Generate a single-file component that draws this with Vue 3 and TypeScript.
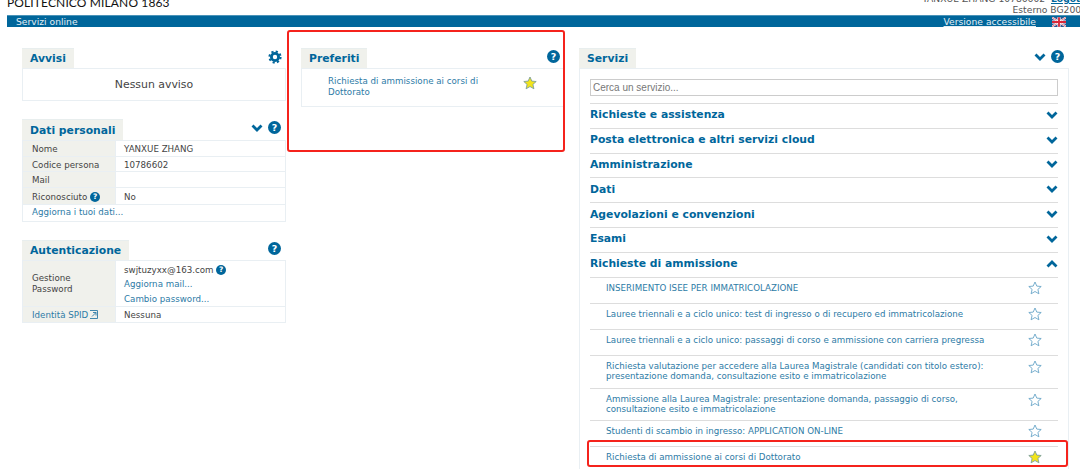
<script setup lang="ts">
const sections: string[] = [
  'Richieste e assistenza',
  'Posta elettronica e altri servizi cloud',
  'Amministrazione',
  'Dati',
  'Agevolazioni e convenzioni',
  'Esami',
]
interface Item { lines: string[]; h: number; on?: boolean }
const items: Item[] = [
  { lines: ['INSERIMENTO ISEE PER IMMATRICOLAZIONE'], h: 26 },
  { lines: ['Lauree triennali e a ciclo unico: test di ingresso o di recupero ed immatricolazione'], h: 26 },
  { lines: ['Lauree triennali e a ciclo unico: passaggi di corso e ammissione con carriera pregressa'], h: 26 },
  { lines: ['Richiesta valutazione per accedere alla Laurea Magistrale (candidati con titolo estero):', 'presentazione domanda, consultazione esito e immatricolazione'], h: 33 },
  { lines: ['Ammissione alla Laurea Magistrale: presentazione domanda, passaggio di corso,', 'consultazione esito e immatricolazione'], h: 32 },
  { lines: ['Studenti di scambio in ingresso: APPLICATION ON-LINE'], h: 26 },
  { lines: ['Richiesta di ammissione ai corsi di Dottorato'], h: 26, on: true },
]
const starPts = '7,1 8.8,5.1 13.2,5.5 9.9,8.4 10.9,12.8 7,10.5 3.1,12.8 4.1,8.4 0.8,5.5 5.2,5.1'
</script>

<template>
  <div class="page">
    <header class="top">
      <div class="logo">POLITECNICO MILANO 1863</div>
      <div class="user">
        <div>YANXUE ZHANG 10786602 &nbsp;<a class="logout">Logout</a></div>
        <div>Esterno BG2001</div>
      </div>
    </header>
    <div class="bar">
      <span>Servizi online</span>
      <span class="bar-right">
        <a class="access">Versione accessibile</a>
        <svg class="flag" width="15" height="10" viewBox="0 0 15 10">
          <rect width="15" height="10" fill="#3c4f8f" />
          <path d="M0 0L15 10M15 0L0 10" stroke="#fff" stroke-width="2" />
          <path d="M0 0L15 10M15 0L0 10" stroke="#d8404a" stroke-width=".8" />
          <path d="M7.5 0V10M0 5H15" stroke="#fff" stroke-width="3.4" />
          <path d="M7.5 0V10M0 5H15" stroke="#d8283a" stroke-width="2" />
        </svg>
      </span>
    </div>

    <main class="cols">
      <div class="col col-left">
        <section class="panel">
          <div class="head">
            <h2 class="tab">Avvisi</h2>
            <svg class="ico gear" width="14" height="14" viewBox="0 0 14 14">
              <circle cx="7" cy="7" r="3.6" fill="none" stroke="#00669b" stroke-width="2.8" />
              <circle cx="7" cy="7" r="5.6" fill="none" stroke="#00669b" stroke-width="2" stroke-dasharray="2.2 2.2" />
            </svg>
          </div>
          <div class="box notice">Nessun avviso</div>
        </section>

        <section class="panel gap-personal">
          <div class="head head-tall">
            <h2 class="tab">Dati personali</h2>
            <svg class="chev" width="12" height="8" viewBox="0 0 12 8"><path d="M1.500 1.500L6 6l4.500-4.500" fill="none" stroke="#00669b" stroke-width="2.800" /></svg>
            <span class="help big">?</span>
          </div>
          <div class="box">
            <div class="row r1"><div class="k">Nome</div><div class="v">YANXUE ZHANG</div></div>
            <div class="row r1"><div class="k">Codice persona</div><div class="v">10786602</div></div>
            <div class="row r1"><div class="k">Mail</div><div class="v"></div></div>
            <div class="row r2"><div class="k">Riconosciuto <span class="help small">?</span></div><div class="v">No</div></div>
            <div class="link-row"><a class="lnk">Aggiorna i tuoi dati...</a></div>
          </div>
        </section>

        <section class="panel gap-auth">
          <div class="head">
            <h2 class="tab">Autenticazione</h2>
            <span class="help big">?</span>
          </div>
          <div class="box">
            <div class="row r3">
              <div class="k center">Gestione<br />Password</div>
              <div class="v stack">
                <div>swjtuzyxx@163.com <span class="help small">?</span></div>
                <a class="lnk">Aggiorna mail...</a>
                <a class="lnk">Cambio password...</a>
              </div>
            </div>
            <div class="row r1">
              <div class="k"><a class="lnk">Identità SPID</a><svg class="ext" width="9" height="9" viewBox="0 0 9 9"><path d="M1 .500h7.500V8.500H1M3 6.500L7 2.500M4 2.500h3v3" fill="none" stroke="#2d7ba6" stroke-width=".9" /></svg></div>
              <div class="v">Nessuna</div>
            </div>
          </div>
        </section>
      </div>

      <div class="col col-mid">
        <section class="panel">
          <div class="head">
            <h2 class="tab">Preferiti</h2>
            <span class="help big">?</span>
          </div>
          <div class="box fav">
            <a class="lnk fav-text">Richiesta di ammissione ai corsi di Dottorato</a>
            <svg class="fav-star" width="14" height="14" viewBox="0 0 14 14"><polygon :points="starPts" fill="#f2e41c" stroke="#7d9f9c" stroke-width=".9" /></svg>
          </div>
        </section>
      </div>

      <div class="col col-right">
        <section class="panel">
          <div class="head">
            <h2 class="tab">Servizi</h2>
            <svg class="chev" width="12" height="8" viewBox="0 0 12 8"><path d="M1.500 1.500L6 6l4.500-4.500" fill="none" stroke="#00669b" stroke-width="2.800" /></svg>
            <span class="help big">?</span>
          </div>
          <div class="box services">
            <input class="search" placeholder="Cerca un servizio..." />
            <div v-for="s in sections" :key="s" class="sec">
              <span>{{ s }}</span>
              <svg width="12" height="8" viewBox="0 0 12 8"><path d="M1.500 1.500L6 6l4.500-4.500" fill="none" stroke="#00669b" stroke-width="2.800" /></svg>
            </div>
            <div class="sec">
              <span>Richieste di ammissione</span>
              <svg width="12" height="8" viewBox="0 0 12 8"><path d="M1.500 6.500L6 2l4.500 4.500" fill="none" stroke="#00669b" stroke-width="2.800" /></svg>
            </div>
            <div v-for="it in items" :key="it.lines[0]" class="item" :style="{ height: it.h + 'px' }">
              <a class="lnk item-text"><span v-for="l in it.lines" :key="l" class="line">{{ l }}</span></a>
              <svg class="item-star" :class="{ double: it.lines.length > 1 }" width="14" height="14" viewBox="0 0 14 14">
                <polygon :points="starPts" :fill="it.on ? '#f2e41c' : '#fff'" :stroke="it.on ? '#7d9f9c' : '#6aa6c8'" stroke-width=".9" />
              </svg>
            </div>
          </div>
        </section>
      </div>
    </main>

    <div class="mark mark-fav"></div>
    <div class="mark mark-item"></div>
  </div>
</template>

<style>
html, body { margin: 0; background: #fff; overflow: hidden; }
</style>

<style scoped>
.page {
  position: relative;
  width: 1080px;
  height: 469px;
  overflow: hidden;
  background: #fff;
  font-family: "DejaVu Sans", Verdana, sans-serif;
  font-size: 8.700px;
  color: #444;
}
a { text-decoration: none; }
.top {
  height: 15px;
  padding-left: 7px;
  display: flex;
  justify-content: space-between;
  align-items: flex-end;
  overflow: hidden;
}
.logo {
  font-family: Lato, sans-serif;
  font-size: 12px;
  line-height: 14px;
  letter-spacing: .13px;
  color: #111;
  margin-bottom: 5px;
}
.user {
  text-align: right;
  font-size: 9.200px;
  line-height: 11px;
  margin-right: -7px;
  color: #555;
  white-space: nowrap;
}
.logout { color: #00669b; font-weight: 700; text-decoration: underline; }
.bar {
  margin-left: 7px;
  height: 12px;
  background: #00669b;
  border-top: 1px solid #4a93b8;
  box-sizing: border-box;
  color: #e4eef4;
  font-size: 9.200px;
  line-height: 11px;
  padding-left: 9px;
  display: flex;
  justify-content: space-between;
}
.bar-right { display: flex; align-items: center; padding-right: 14px; gap: 16px; }
.access { color: #e4eef4; text-decoration: underline; }
.flag { display: block; width: 14px; height: 10px; }
.cols {
  display: flex;
  padding: 21px 11px 0 22px;
  align-items: flex-start;
}
.col-left { width: 264px; }
.col-mid { width: 264px; margin-left: 15px; }
.col-right { width: 490px; margin-left: 14px; }
.head { display: flex; align-items: flex-start; height: 20px; }
.head-tall { height: 21px; }
.tab {
  margin: 0;
  padding: 0 8px;
  height: 20px;
  background: #f0f1ec;
  border-top: 1px solid #e8eeee;
  box-sizing: border-box;
  font-size: 10.800px;
  font-weight: 700;
  line-height: 20px;
  color: #00669b;
}
.head-tall .tab { height: 21px; line-height: 21px; }
.ico, .chev { flex: none; }
.gear { margin: 2px 4px 0 auto; }
.chev { margin: 5px 5px 0 auto; }
.help {
  display: inline-block;
  border-radius: 50%;
  background: #00669b;
  color: #fff;
  font-weight: 700;
  text-align: center;
}
.help.big { width: 13px; height: 13px; line-height: 13px; font-size: 9.500px; margin: 2px 5px 0 0; flex: none; }
.head > .tab + .help.big { margin-left: auto; }
.help.small { width: 10px; height: 10px; line-height: 10px; font-size: 7.500px; vertical-align: 1px; }
.box { border: 1px solid #e9eff3; box-sizing: border-box; }
.notice { height: 33px; line-height: 31px; text-align: center; font-size: 10.900px; }
.gap-personal { margin-top: 18px; }
.gap-auth { margin-top: 18px; }
.row { display: flex; box-sizing: border-box; border-bottom: 1px solid #e9eff3; }
.k {
  width: 93px;
  flex: none;
  padding-left: 9px;
  box-sizing: border-box;
  background: #f0f1ec;
  border-right: 1px solid #e9eff3;
}
.v { padding-left: 8px; }
.r1 { height: 15.500px; line-height: 16px; }
.r2 { height: 17px; line-height: 18px; }
.r3 { height: 46px; }
.r1:last-child { border-bottom: 0; }
.center { display: flex; align-items: center; line-height: 11px; padding-top: 2px; }
.stack { display: flex; flex-direction: column; line-height: 14.300px; padding-top: 2.500px; }
.lnk { color: #2d7ba6; }
.link-row { height: 16px; line-height: 15px; padding-left: 9px; }
.ext { margin-left: 1px; vertical-align: -1px; }
.fav { height: 39px; position: relative; padding: 7px 44px 0 26px; line-height: 11px; display: flex; justify-content: space-between; }
.fav-text { width: 175px; }
.fav-star { flex: none; margin-top: 0; margin-right: -17px; }
.services { height: 420px; padding: 10px 10px 0 10px; border-bottom: 0; }
.search {
  display: block;
  width: 100%;
  height: 17px;
  box-sizing: border-box;
  border: 1px solid #ccc;
  padding: 0 2px;
  margin: 0 0 7px;
  font-family: "Liberation Sans", Arial, sans-serif;
  font-size: 10px;
  outline: none;
}
.search::placeholder { color: #777; opacity: 1; }
.sec {
  height: 24.800px;
  box-sizing: border-box;
  border-top: 1px solid #ddd;
  padding-bottom: 2px;
  display: flex;
  align-items: center;
  justify-content: space-between;
  font-size: 10.800px;
  font-weight: 700;
  color: #00669b;
}
.item {
  box-sizing: border-box;
  border-top: 1px solid #ddd;
  display: flex;
  justify-content: space-between;
  padding: 5px 16px 0 16px;
  line-height: 10.700px;
}
.line { display: block; }
.item-star { flex: none; margin-top: -2px; }
.item-star.double { margin-top: -1px; }
.mark { position: absolute; border: 2px solid #f5231c; border-radius: 3px; box-sizing: border-box; }
.mark-fav { left: 287px; top: 30px; width: 278px; height: 122px; }
.mark-item { left: 587px; top: 440px; width: 481px; height: 27px; }
</style>
